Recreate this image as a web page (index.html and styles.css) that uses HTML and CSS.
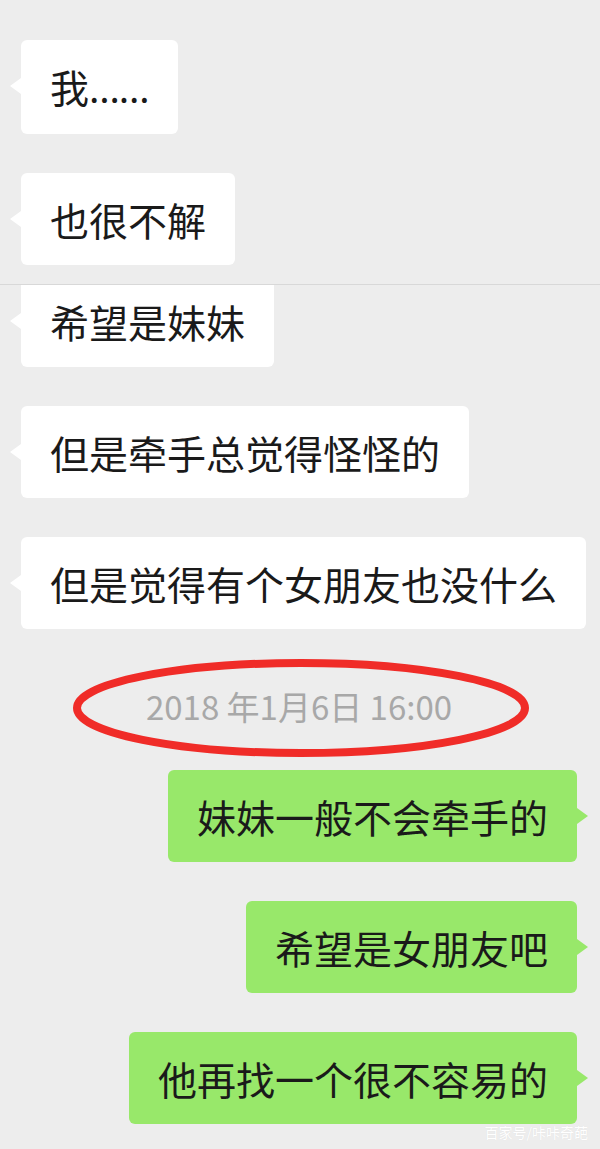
FILE: index.html
```html
<!DOCTYPE html>
<html lang="zh-CN">
<head>
    <meta charset="UTF-8">
    <title>聊天记录</title>
    <meta name="viewport" content="width=device-width, initial-scale=1.0">
    <link rel="stylesheet" href="styles.css">
</head>
<body>
    <div class="shot shot-top">
        <div class="row left"><div class="bubble">我<span class="dots">……</span></div></div>
        <div class="row left"><div class="bubble">也很不解</div></div>
    </div>

    <div class="shot shot-bottom">
        <div class="row left cut"><div class="bubble">希望是妹妹</div></div>
        <div class="row left"><div class="bubble">但是牵手总觉得怪怪的</div></div>
        <div class="row left"><div class="bubble">但是觉得有个女朋友也没什么</div></div>

        <div class="time">
            <span>2018 年1月6日 16:00</span>
            <svg class="circle" width="460" height="102" viewBox="0 0 460 102">
                <ellipse cx="229" cy="50" rx="224" ry="45" fill="none" stroke="#f02c28" stroke-width="8"/>
            </svg>
        </div>

        <div class="row right"><div class="bubble">妹妹一般不会牵手的</div></div>
        <div class="row right"><div class="bubble">希望是女朋友吧</div></div>
        <div class="row right"><div class="bubble">他再找一个很不容易的</div></div>

        <div class="mark">百家号/咔咔奇葩</div>
    </div>
</body>
</html>
```

FILE: styles.css
```css
body {
    margin: 0;
    background: #ededed;
    font-family: "Noto Sans CJK SC", "Noto Sans", sans-serif;
    color: #1a1a1a;
}

.shot {
    display: flex;
    flex-direction: column;
    gap: 39px;
    padding: 0 23px 0 21px;
}

.shot-top {
    padding-top: 40px;
    padding-bottom: 19px;
    border-bottom: 1px solid #d8d8d8;
}

.shot-bottom {
    position: relative;
    overflow: hidden;
    height: 866px;
}

.row {
    display: flex;
}

.row.right {
    justify-content: flex-end;
}

.row.cut {
    margin-top: -10px;
}

.bubble {
    position: relative;
    background: #fff;
    border-radius: 6px;
    font-size: 39px;
    line-height: 52px;
    padding: 20px 29px;
    white-space: nowrap;
}

.bubble::before {
    content: "";
    position: absolute;
    top: 38px;
    border-top: 8px solid transparent;
    border-bottom: 8px solid transparent;
}

.left .bubble::before {
    left: -11px;
    border-right: 11px solid #fff;
}

.right .bubble {
    background: #98e86a;
}

.right .bubble::before {
    right: -11px;
    border-left: 11px solid #98e86a;
}

.dots {
    font-family: "Noto Sans", sans-serif;
    letter-spacing: -1px;
}

.time {
    position: relative;
    text-align: center;
    font-size: 33px;
    line-height: 40px;
    color: #a8a8a8;
    padding: 18px 0 5px;
}

.circle {
    position: absolute;
    left: 51px;
    top: -10px;
}

.mark {
    position: absolute;
    right: 12px;
    bottom: 11px;
    font-size: 14px;
    line-height: 16px;
    color: #fff;
    text-shadow: 0 0 1px rgba(0, 0, 0, 0.08);
}
```
